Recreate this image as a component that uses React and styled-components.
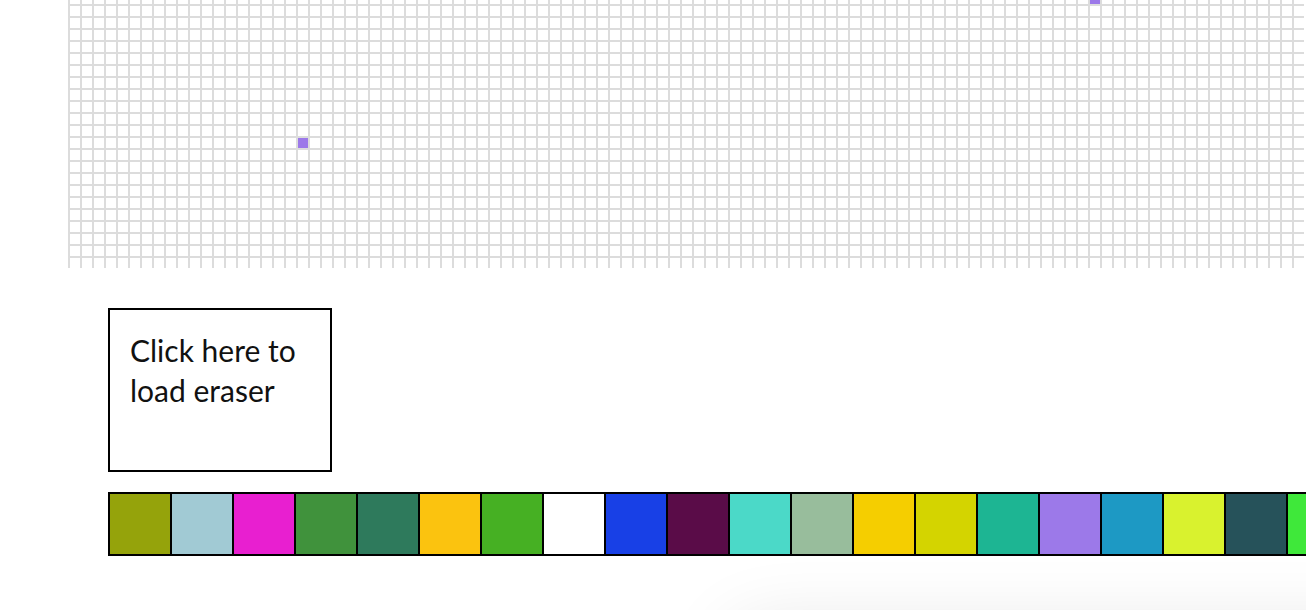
import React from "react";
import styled, { createGlobalStyle } from "styled-components";

const Global = createGlobalStyle`
  html, body { margin: 0; padding: 0; background: #fff; overflow: hidden; }
  body { font-family: Lato, "Noto Sans", sans-serif; }
`;

const COLS = 103;
const ROWS = 23;
const painted = { "0-85": "#9c79e9", "12-19": "#9c79e9" };

const PALETTE = [
  "#95a30b", "#a1cad4", "#e81fd0", "#40923c", "#2e7a5c", "#fbc30f", "#46b023",
  "#ffffff", "#1840e6", "#5a0c48", "#4bd9c8", "#98bd9c", "#f5ce00", "#d4d400",
  "#1db593", "#9c79e9", "#1d99c4", "#d9f22e", "#26525a", "#3fe83a", "#e84a3a",
];

const Page = styled.div`
  display: flex;
  flex-direction: column;
  width: 1306px;
`;

const CanvasViewport = styled.div`
  margin: -8px 0 0 68px;
  height: 276px;
  overflow: hidden;
`;

const PixelGrid = styled.div`
  display: grid;
  grid-template-columns: repeat(${COLS}, 10px);
  grid-auto-rows: 10px;
  gap: 2px;
  padding: 2px 0 0 2px;
  background: #dcdcdc;
  width: max-content;
`;

const Pixel = styled.div`
  background: ${(p) => p.$color || "#ffffff"};
`;

const EraserButton = styled.button`
  box-sizing: border-box;
  margin: 40px 0 0 108px;
  width: 224px;
  height: 164px;
  padding: 20px 20px;
  border: 2px solid #000;
  background: #fff;
  color: #111;
  font-family: Lato, "Noto Sans", sans-serif;
  font-size: 30px;
  line-height: 40px;
  text-align: left;
  display: flex;
  align-items: flex-start;
  cursor: pointer;
`;

const PaletteViewport = styled.div`
  margin: 20px 0 0 108px;
  overflow: hidden;
`;

const PaletteRow = styled.div`
  display: flex;
  gap: 2px;
  padding: 2px;
  background: #000;
  width: max-content;
`;

const Swatch = styled.div`
  width: 60px;
  height: 60px;
  flex-shrink: 0;
  background: ${(p) => p.$color};
`;

const OffscreenPanel = styled.div`
  position: fixed;
  top: 626px;
  left: 730px;
  width: 760px;
  height: 200px;
  border-radius: 28px;
  background: #fff;
  box-shadow: 0 0 75px rgba(0, 0, 0, 0.11);
`;

export default function App() {
  const cells = [];
  for (let r = 0; r < ROWS; r++) {
    for (let c = 0; c < COLS; c++) {
      cells.push(<Pixel key={`${r}-${c}`} $color={painted[`${r}-${c}`]} />);
    }
  }
  return (
    <>
      <Global />
      <Page>
        <CanvasViewport>
          <PixelGrid>{cells}</PixelGrid>
        </CanvasViewport>
        <EraserButton>Click here to load eraser</EraserButton>
        <PaletteViewport>
          <PaletteRow>
            {PALETTE.map((c, i) => (
              <Swatch key={i} $color={c} />
            ))}
          </PaletteRow>
        </PaletteViewport>
      </Page>
      <OffscreenPanel />
    </>
  );
}
